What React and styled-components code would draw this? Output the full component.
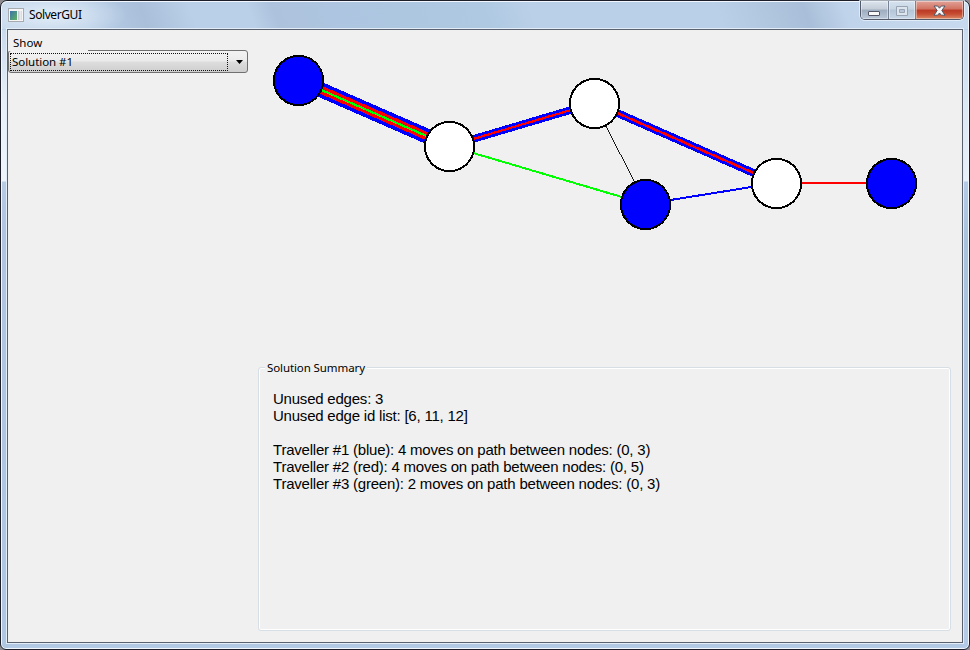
import React from "react";
import styled, { createGlobalStyle } from "styled-components";

const GlobalStyle = createGlobalStyle`
  *, *::before, *::after { box-sizing: border-box; }
  html, body { margin: 0; background: #8d8b90; overflow: hidden; }
`;

const uiFont = `"Noto Sans", "Open Sans", sans-serif`;

const Frame = styled.div`
  width: 970px;
  height: 650px;
  display: flex;
  flex-direction: column;
  padding: 0 6px 6px;
  border: 1px solid #1c1f29;
  border-radius: 7px 7px 6px 6px;
  box-shadow: inset 0 0 0 1px #f1f7fd;
  background:
    linear-gradient(180deg, #c9daed 0, #e6eff8 70px, #eff5fb 151px, #b6cce5 152px, #afc5e0 200px, #b0c7e2 100%) 0 29px / 7px 100% no-repeat,
    linear-gradient(180deg, #c9dcef 0, #dce8f5 80px, #e9f1fa 151px, #b3cbe6 152px, #a9c2de 210px, #b5cce8 100%) 100% 29px / 7px 100% no-repeat,
    linear-gradient(180deg, #afc5e0, #b5cce8) 0 100% / 100% 7px no-repeat,
    #bad0e8;
`;

const TitleBar = styled.header`
  height: 28px;
  margin: 0 -5px;
  padding: 0 0 0 6px;
  display: flex;
  align-items: flex-start;
  border-top: 1px solid #f1f7fd;
  border-radius: 6px 6px 0 0;
  background:
    radial-gradient(ellipse 75px 24px at 50px 13px, rgba(235, 243, 251, .8), rgba(235, 243, 251, 0)),
    linear-gradient(70deg, #c5d7eb 0, #bad0e8 9%, #a9bfda 15%, #bad0e8 20%, #bad0e8 26%, #adc2dd 28.5%, #adc5e0 34%, #afc9e2 50%, #bad0e8 55%, #bad0e8 74%, #a9bfd9 83%, #bfd3ea 87%, #c8daee 100%);
`;

const AppIcon = styled.svg`
  width: 16px;
  height: 14px;
  margin-top: 6px;
  flex: none;
`;

const Title = styled.h1`
  margin: 3px 0 0 5px;
  flex: 1;
  font: 400 12px/19px ${uiFont};
  letter-spacing: -0.42px;
  color: #000;
`;

const Controls = styled.div`
  display: flex;
  width: 104px;
  height: 19px;
  margin: -1px 4px 0 0;
  border: 1px solid #525968;
  border-top: 0;
  border-radius: 0 0 5px 5px;
  box-shadow: 0 0 0 1px rgba(240, 247, 255, .65);
  overflow: hidden;
`;

const fills = {
  normal: "linear-gradient(#dce5ed 0, #c4cdd8 45%, #9dacbe 50%, #bac8d9 100%)",
  disabled: "linear-gradient(#d6e2ee 0, #c7d5e4 45%, #b4c5d8 50%, #c7d7e8 100%)",
  close: "linear-gradient(#e2a399 0, #d1715f 45%, #bb3925 50%, #c54c31 72%, #dd8a65 100%)",
};

const ControlButton = styled.button`
  width: ${(p) => p.$width}px;
  height: 18px;
  padding: 0;
  display: grid;
  place-items: center;
  border: 0;
  border-right: ${(p) => (p.$kind === "close" ? "0" : "1px solid #778294")};
  background: ${(p) => fills[p.$kind]};
  box-shadow: inset 0 0 0 1px rgba(255, 255, 255, .4);
`;

const Client = styled.main`
  flex: 1;
  display: grid;
  grid-template-columns: 250px 1fr;
  border: 1px solid #58616d;
  background: #f0f0f0;
  overflow: hidden;
  box-shadow: 0 0 0 1px #e3edf7;
`;

const Sidebar = styled.section`
  display: flex;
  flex-direction: column;
  align-items: flex-start;
`;

const FieldLabel = styled.label`
  width: 80px;
  height: 20px;
  padding-left: 5px;
  font: 400 11.5px/26px ${uiFont};
  color: #000;
  background: #f0f0f0;
  white-space: nowrap;
`;

const Combo = styled.button`
  width: 240px;
  height: 23px;
  padding: 1px;
  display: flex;
  align-items: center;
  border: 1px solid #707070;
  border-radius: 3px;
  background: linear-gradient(#f2f2f2 0, #ebebeb 48%, #dddddd 52%, #cfcfcf 100%);
  clip-path: polygon(0 1px, 5px 1px, 80px 1px, 80px 0, 100% 0, 100% 100%, 0 100%);
`;

const ComboValue = styled.span`
  width: 218px;
  height: 18px;
  padding-left: 1px;
  border: 1px dotted #111;
  font: 400 11.5px/16px ${uiFont};
  letter-spacing: -0.05px;
  color: #000;
  text-align: left;
  white-space: nowrap;
`;

const Caret = styled.svg`
  width: 7px;
  height: 4px;
  margin: 1px 0 0 8px;
`;

const Content = styled.section`
  display: flex;
  flex-direction: column;
  min-width: 0;
`;

const Graph = styled.svg`
  display: block;
  width: 704px;
  height: 329px;
  flex: none;
`;

const Summary = styled.fieldset`
  width: 693px;
  height: 272px;
  margin: 0;
  padding: 0 0 0 13px;
  min-width: 0;
  border: 1px solid #d5dfe5;
  border-radius: 3px;
  box-shadow: inset 0 0 0 1px #fff;
`;

const Legend = styled.legend`
  margin-left: -7px;
  padding: 0 2px;
  font: 400 11.5px/17px ${uiFont};
  letter-spacing: -0.1px;
  color: #000;
  background: #f0f0f0;
`;

const Lines = styled.div`
  padding: 14px 0 0 1px;
`;

const Line = styled.p`
  margin: 0;
  height: 17px;
  font: 400 15px/17px "Liberation Sans", Arial, sans-serif;
  letter-spacing: -0.215px;
  color: #000;
  white-space: pre;
`;

const nodes = [
  { x: 298.5, y: 80.5, fill: "#0000ff" },
  { x: 449.5, y: 146.5, fill: "#fff" },
  { x: 594.5, y: 103.5, fill: "#fff" },
  { x: 645.5, y: 204.5, fill: "#0000ff" },
  { x: 776.5, y: 183.5, fill: "#fff" },
  { x: 891.5, y: 183.5, fill: "#0000ff" },
];

const BLUE = "#0000ff";
const RED = "#ff0000";
const GREEN = "#00ff00";

const edges = [
  [0, 1, BLUE, 15],
  [0, 1, RED, 8],
  [0, 1, GREEN, 2.2],
  [1, 2, BLUE, 7.5],
  [1, 2, RED, 2.2],
  [2, 4, BLUE, 7.8],
  [2, 4, RED, 2.4],
  [1, 3, GREEN, 2],
  [2, 3, "#000", 0.9],
  [3, 4, BLUE, 2],
  [4, 5, RED, 2],
];

const lines = [
  "Unused edges: 3",
  "Unused edge id list: [6, 11, 12]",
  "",
  "Traveller #1 (blue): 4 moves on path between nodes: (0, 3)",
  "Traveller #2 (red): 4 moves on path between nodes: (0, 5)",
  "Traveller #3 (green): 2 moves on path between nodes: (0, 3)",
];

function WindowControls() {
  return (
    <Controls>
      <ControlButton $kind="normal" $width={28} aria-label="Minimize">
        <svg width="13" height="16" viewBox="0 0 13 16">
          <rect x="0.5" y="9.5" width="11" height="4" rx="0.5" fill="#f8f8f8" stroke="#535666" />
        </svg>
      </ControlButton>
      <ControlButton $kind="disabled" $width={27} aria-label="Maximize">
        <svg width="12" height="16" viewBox="0 0 12 16">
          <path d="M.5 4.5h11v9H.5zM3.5 7.5h5v3h-5z" fill="#dce5ed" fillRule="evenodd" stroke="#98a4b3" />
        </svg>
      </ControlButton>
      <ControlButton $kind="close" $width={47} aria-label="Close">
        <svg width="13" height="16" viewBox="0 0 13 16">
          <path
            d="M1 4h3.7l1.8 2.2L8.3 4H12L8.8 8.5 12 13.2H8.3L6.5 11l-1.8 2.2H1l3.2-4.7z"
            fill="#f8f8f8"
            stroke="#535666"
          />
        </svg>
      </ControlButton>
    </Controls>
  );
}

export default function App() {
  return (
    <>
      <GlobalStyle />
      <Frame>
        <TitleBar>
          <AppIcon viewBox="0 0 16 14">
            <defs>
              <linearGradient id="pane" x2="1" y2="1">
                <stop stopColor="#3c73ac" />
                <stop offset="1" stopColor="#5fb35e" />
              </linearGradient>
            </defs>
            <rect x=".5" y=".5" width="15" height="13" fill="#f5f5f5" stroke="#a7abb0" />
            <rect x="2" y="3" width="7" height="9" fill="url(#pane)" />
            <rect x="10" y="3" width="1.5" height="9" fill="#c6ccd1" />
            <rect x="12.5" y="3" width="1.5" height="9" fill="#d9dde0" />
          </AppIcon>
          <Title>SolverGUI</Title>
          <WindowControls />
        </TitleBar>
        <Client>
          <Sidebar>
            <FieldLabel>Show</FieldLabel>
            <Combo>
              <ComboValue>Solution #1</ComboValue>
              <Caret viewBox="0 0 7 4">
                <path d="M0 0h7L3.5 4z" />
              </Caret>
            </Combo>
          </Sidebar>
          <Content>
            <Graph viewBox="258 30 704 329" shapeRendering="crispEdges">
              {edges.map(([a, b, color, width]) => (
                <line
                  key={`${a}-${b}-${color}`}
                  x1={nodes[a].x}
                  y1={nodes[a].y - 0.5}
                  x2={nodes[b].x}
                  y2={nodes[b].y - 0.5}
                  stroke={color}
                  strokeWidth={width}
                />
              ))}
              {nodes.map((n) => (
                <circle key={n.x} cx={n.x} cy={n.y} r="24.6" fill={n.fill} stroke="#000" strokeWidth="2" />
              ))}
            </Graph>
            <Summary>
              <Legend>Solution Summary</Legend>
              <Lines>
                {lines.map((text, i) => (
                  <Line key={i}>{text}</Line>
                ))}
              </Lines>
            </Summary>
          </Content>
        </Client>
      </Frame>
    </>
  );
}
